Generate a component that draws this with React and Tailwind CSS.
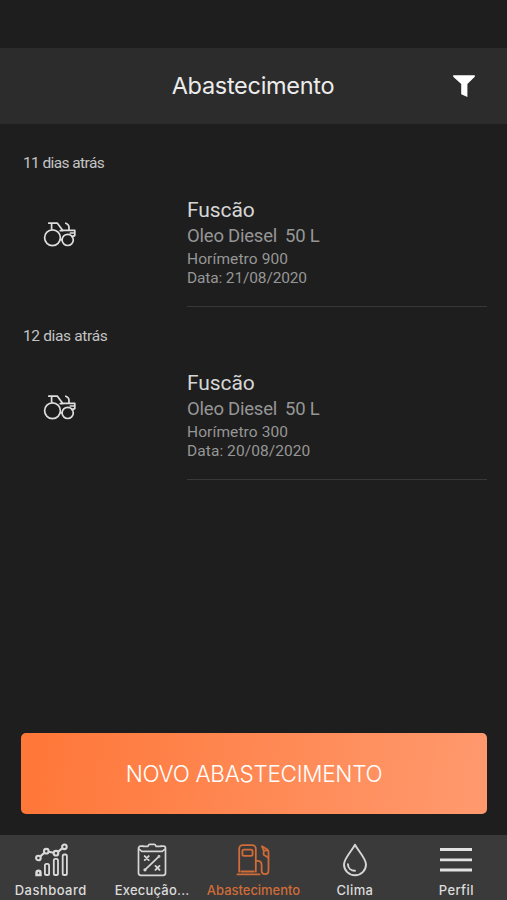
import React from "react";

const entries = [
  { age: "11 dias atrás", ageSpacing: "tracking-[-0.6px]", name: "Fuscão", fuel: "Oleo Diesel", amount: "50 L", meter: "Horímetro 900", date: "Data: 21/08/2020", dateSpacing: "tracking-[-0.14px]" },
  { age: "12 dias atrás", ageSpacing: "tracking-[-0.35px]", name: "Fuscão", fuel: "Oleo Diesel", amount: "50 L", meter: "Horímetro 300", date: "Data: 20/08/2020", dateSpacing: "tracking-[0.07px]" },
];

function FilterIcon() {
  return (
    <svg width="24" height="24" viewBox="0 0 24 24" fill="#fff">
      <path d="M1.2 1.2h21.6v1.5l-7.4 7.2v13L9.2 20.2V9.9l-8-7.2z" />
    </svg>
  );
}

function TractorIcon() {
  return (
    <svg width="34" height="28" viewBox="0 0 34 28" fill="none" stroke="#dedede" strokeWidth="1.7" strokeLinejoin="round" strokeLinecap="round">
      <circle cx="9.5" cy="16.8" r="7.9" />
      <circle cx="24.7" cy="18.9" r="5.6" />
      <path d="M5.8 2.2h8.6l5.4 7.2h12v5.2l-2.8 1M8.6 2.4v5.4M17.2 9.6h3M17.3 18.6h1.6M27.3 12h4.3" />
      <path d="M22.8 2.2c2 .8 3.4 2.4 3.2 4.8v2" />
    </svg>
  );
}

function ChartIcon() {
  return (
    <svg width="34" height="34" viewBox="0 0 34 34" fill="none" stroke="#dadada" strokeWidth="1.8">
      <g strokeWidth="2.1">
        <circle cx="4.4" cy="15" r="2.3" />
        <circle cx="12.3" cy="8.2" r="2.3" />
        <circle cx="22" cy="10.2" r="2.3" />
        <circle cx="30.4" cy="3.8" r="2.3" />
        <path d="m6.3 13.4 4.1-3.6m4.5-1 4.6.9m4.7-1.1 4-3.2" />
      </g>
      <path d="M2.5 32v-2.2a2 2 0 0 1 4 0V32z" strokeWidth="2.4" />
      <rect x="10.9" y="20.9" width="4.2" height="11.1" rx="1.6" />
      <rect x="19.8" y="15.8" width="4.2" height="16.2" rx="1.6" />
      <rect x="28.7" y="11.5" width="4.2" height="20.5" rx="1.6" />
    </svg>
  );
}

function ClipboardIcon() {
  return (
    <svg width="30" height="34" viewBox="0 0 30 34" fill="none" stroke="#d6d6d6" strokeWidth="1.7" strokeLinecap="round" strokeLinejoin="round">
      <path d="M6 3.2H3.5a2 2 0 0 0-2 2V30a2.3 2.3 0 0 0 2.3 2.3h22.4a2.3 2.3 0 0 0 2.3-2.3V5.2a2 2 0 0 0-2-2H24" />
      <path d="M2 6.2 4.8 8.4h20.4L28 6.2M6 3.3h5c.4-1.2.8-1.9 1.8-1.9h4.4c1 0 1.4.7 1.8 1.9h5" />
      <path d="m9 25.8 12-11.5" />
      <path d="m7.7 13.1 4 4m0-4-4 4m10.8 5.8 4 4m0-4-4 4" strokeWidth="1.9" />
      <circle cx="8" cy="26.8" r=".8" />
      <circle cx="22" cy="13.4" r=".6" />
    </svg>
  );
}

function PumpIcon() {
  return (
    <svg width="34" height="34" viewBox="0 0 34 34" fill="none" stroke="#cf6c38" strokeWidth="1.8" strokeLinecap="round" strokeLinejoin="round">
      <path d="M3.2 28.7V5.7a3.6 3.6 0 0 1 3.6-3.6h9.4a3.6 3.6 0 0 1 3.6 3.6v23" />
      <path d="M5.2 28.5h12.6M1.4 31.4h22.2" />
      <rect x="6.4" y="6.6" width="10.2" height="6.2" rx="1.6" />
      <path d="M19.8 17.8h1.6c2.9 0 4.2 1.6 4.2 4.2v5.6c0 4.8 6.9 4.8 6.9 0V9c0-1.2-.6-2-1.5-2.8L26 3.2" />
      <path d="m26.2 4.2 1.5 3.2v4.4l4.5 2.7M28.2 7.6l3.4-.3" />
    </svg>
  );
}

function DropIcon() {
  return (
    <svg width="26" height="34" viewBox="0 0 26 34" fill="none" stroke="#d6d6d6" strokeWidth="1.9" strokeLinecap="round" strokeLinejoin="round">
      <path d="M13 1.7C9.6 8.2 2 15.4 2 21.5a11 10.8 0 0 0 22 0C24 15.4 16.4 8.2 13 1.7z" />
      <path d="M5.9 21.2c.2 3.9 3.2 6.5 7.1 6.6" />
    </svg>
  );
}

function MenuIcon() {
  return (
    <svg width="34" height="34" viewBox="0 0 34 34" fill="none" stroke="#e2e2e2" strokeWidth="2.8">
      <path d="M1 6.5h32M1 16.8h32M1 27h32" />
    </svg>
  );
}

const tabs = [
  { label: "Dashboard", Icon: ChartIcon, text: "tracking-[0.45px]" },
  { label: "Execução...", Icon: ClipboardIcon, text: "tracking-[0.22px]" },
  { label: "Abastecimento", Icon: PumpIcon, text: "tracking-[-0.03px]", active: true },
  { label: "Clima", Icon: DropIcon, text: "tracking-[0.4px]" },
  { label: "Perfil", Icon: MenuIcon, text: "tracking-[0.4px]" },
];

function Entry({ entry }) {
  return (
    <section className="h-[173px] pt-[29px]">
      <h2 className={`pl-[23px] text-[15.5px] leading-5 text-[#c4c4c4] ${entry.ageSpacing}`}>{entry.age}</h2>
      <div className="mt-[23px] flex pr-5">
        <div className="w-[187px] shrink-0 pt-[25px] pl-[43px]">
          <TractorIcon />
        </div>
        <div className="h-[111px] grow border-b border-[#383838] whitespace-nowrap">
          <p className="text-[21px] leading-7 tracking-[-0.1px] text-[#d6d6d6]">{entry.name}</p>
          <p className="flex gap-[8px] text-[18.5px] leading-6 tracking-[-0.22px] text-[#969696]">
            <span>{entry.fuel}</span>
            <span>{entry.amount}</span>
          </p>
          <p className="pt-[2px] text-[15.5px] leading-[19px] tracking-[0.1px] text-[#969696]">{entry.meter}</p>
          <p className={`text-[15.5px] leading-[19px] text-[#969696] ${entry.dateSpacing}`}>{entry.date}</p>
        </div>
      </div>
    </section>
  );
}

export default function App() {
  return (
    <div className="flex h-[900px] w-[507px] flex-col overflow-hidden bg-[#1e1e1e] pt-12 font-['Roboto',sans-serif]">
      <header className="grid h-[76px] shrink-0 grid-cols-[1fr_auto_1fr] items-center bg-[#2c2c2c] font-['Inter',sans-serif]">
        <span />
        <h1 className="pr-px text-[23.5px] leading-8 tracking-[-0.29px] text-[#ececec]">Abastecimento</h1>
        <button className="justify-self-end pr-[31px]"><FilterIcon /></button>
      </header>
      <main className="grow">
        {entries.map((entry) => <Entry key={entry.age} entry={entry} />)}
      </main>
      <button className="mr-5 mb-[21px] ml-[21px] h-[81px] shrink-0 rounded-[5px] bg-[linear-gradient(100deg,#ff783a_5%,#ff986c_95%)] pt-px font-['Inter',sans-serif] text-[22.5px] font-light tracking-[-0.29px] text-white">
        NOVO ABASTECIMENTO
      </button>
      <nav className="grid h-[65px] shrink-0 grid-cols-5 bg-[#3a3a3a] pt-2 font-['Inter',sans-serif]">
        {tabs.map(({ label, Icon, text, active }) => (
          <div key={label} className="flex flex-col items-center">
            <Icon />
            <span className={`mt-[5px] text-[13px] leading-4 font-medium whitespace-nowrap ${text} ${active ? "text-[#cf6c38]" : "text-[#dcdcdc]"}`}>{label}</span>
          </div>
        ))}
      </nav>
    </div>
  );
}
